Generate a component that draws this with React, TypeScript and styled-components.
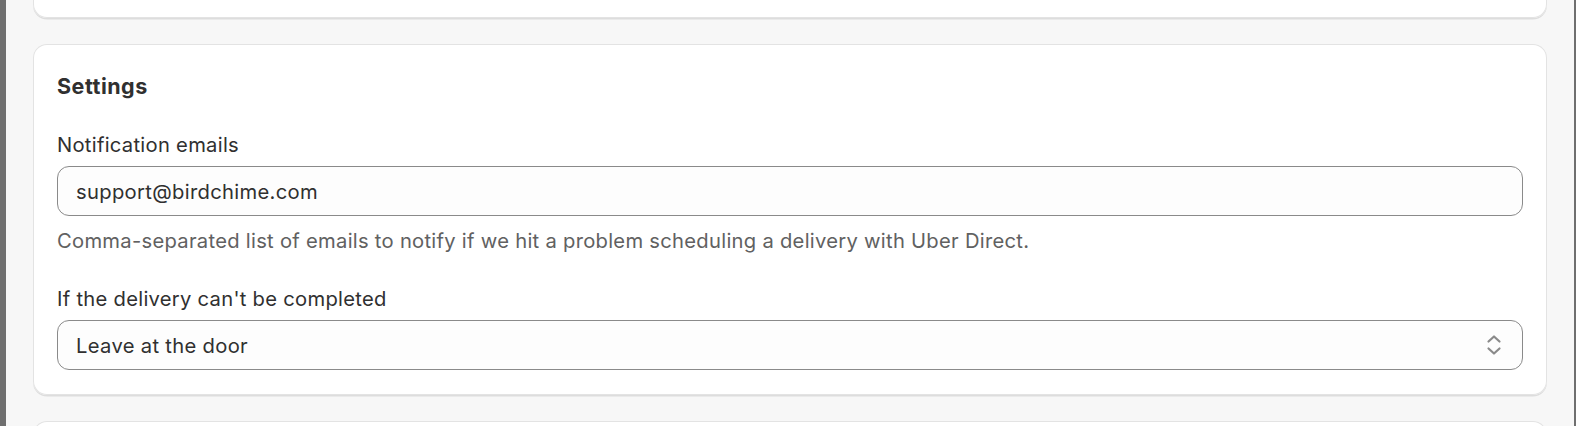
import React from 'react'
import styled, { createGlobalStyle } from 'styled-components'

const GlobalStyle = createGlobalStyle`
  html, body {
    margin: 0;
    padding: 0;
    height: 100%;
  }
  body {
    font-family: Inter, "Noto Sans", "Liberation Sans", sans-serif;
    color: #303030;
    background: #f7f7f7;
    -webkit-font-smoothing: antialiased;
  }
`

const Frame = styled.div`
  display: flex;
  height: 100vh;
  overflow: hidden;
`

const EdgeBar = styled.div<{ $width: number }>`
  flex: 0 0 ${(p) => p.$width}px;
  background: #6f6f6f;
`

const Main = styled.main`
  flex: 1;
  padding: 0 27px;
  overflow: hidden;
`

const Stack = styled.div`
  display: flex;
  flex-direction: column;
  gap: 26px;
  margin-top: -62px;
`

const Card = styled.section<{ $height?: number }>`
  background: #ffffff;
  border-radius: 14px;
  padding: 24px 24px 25px;
  box-shadow:
    inset 0 0 0 1px #e3e3e3,
    0 1.5px 0 rgba(0, 0, 0, 0.1);
  ${(p) => (p.$height ? `height: ${p.$height}px; box-sizing: border-box;` : '')}
`

const CardTitle = styled.h2`
  margin: 0 0 26px;
  font-size: 21.5px;
  line-height: 36px;
  font-weight: 650;
  letter-spacing: 0.5px;
  color: #303030;
`

const Field = styled.div`
  display: flex;
  flex-direction: column;
  & + & {
    margin-top: 28px;
  }
`

const Label = styled.label`
  font-size: 20.2px;
  line-height: 30px;
  letter-spacing: 0.28px;
  color: #303030;
  margin-bottom: 6px;
`

const InputBox = styled.div`
  display: flex;
  align-items: center;
  height: 50px;
  box-sizing: border-box;
  border: 1px solid #8a8a8a;
  border-radius: 12px;
  background: #fdfdfd;
  padding: 0 18px;
  font-size: 20.2px;
  letter-spacing: 0.32px;
  color: #303030;
`

const InputValue = styled.span`
  flex: 1;
`

const HelpText = styled.p`
  margin: 10px 0 0;
  font-size: 20.2px;
  line-height: 30px;
  letter-spacing: 0.28px;
  color: #616161;
`

const SelectIcon = styled.svg`
  width: 20px;
  height: 24px;
  margin-right: 0;
  color: #8a8a8a;
`

const UpDown = () => (
  <SelectIcon viewBox="0 0 20 24" fill="none" stroke="currentColor" strokeWidth="2.2" strokeLinecap="round" strokeLinejoin="round">
    <path d="M4.5 8.5 10 3.5l5.5 5" />
    <path d="M4.5 15.5 10 20.5l5.5-5" />
  </SelectIcon>
)

export default function App() {
  return (
    <>
      <GlobalStyle />
      <Frame>
        <EdgeBar $width={6} />
        <Main>
          <Stack>
            <Card $height={80} />
            <Card>
              <CardTitle>Settings</CardTitle>
              <Field>
                <Label>Notification emails</Label>
                <InputBox>
                  <InputValue>support@birdchime.com</InputValue>
                </InputBox>
                <HelpText>
                  Comma-separated list of emails to notify if we hit a problem scheduling a delivery with Uber Direct.
                </HelpText>
              </Field>
              <Field>
                <Label>If the delivery can't be completed</Label>
                <InputBox>
                  <InputValue>Leave at the door</InputValue>
                  <UpDown />
                </InputBox>
              </Field>
            </Card>
            <Card $height={200} />
          </Stack>
        </Main>
        <EdgeBar $width={2} />
      </Frame>
    </>
  )
}
